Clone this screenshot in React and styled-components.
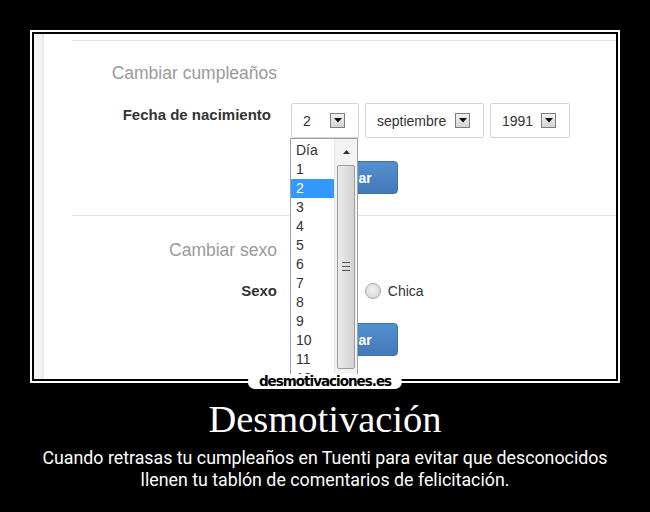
import styled, { createGlobalStyle } from "styled-components";

const GlobalStyle = createGlobalStyle`
  html, body {
    margin: 0;
    background: #000;
  }
`;

const days = ["Día", "1", "2", "3", "4", "5", "6", "7", "8", "9", "10", "11", "12"];

// flecha del desplegable, dibujada en svg
const Caret = () => (
  <svg width="8" height="5" viewBox="0 0 8 5">
    <path d="M0 0h8L4 4.5z" fill="#111" />
  </svg>
);

const Select = ({ value, width }) => (
  <SelectBox $w={width}>
    <span>{value}</span>
    <ArrowBtn>
      <Caret />
    </ArrowBtn>
  </SelectBox>
);

export default function App() {
  return (
    <Page>
      <GlobalStyle />
      <Frame>
        <Screen>
          <Rail />
          <Main>
            <Section $divider>
              <Heading>Cambiar cumpleaños</Heading>
              <FieldRow $top={20}>
                <Label $inset={6}>Fecha de nacimiento</Label>
                <Selects>
                  <Select value="2" width={68} />
                  <Select value="septiembre" width={119} />
                  <Select value="1991" width={80} />
                </Selects>
              </FieldRow>
              <FieldRow $top={23}>
                <span />
                <SaveButton>Guardar</SaveButton>
              </FieldRow>
            </Section>

            <Section $first={24}>
              <Heading>Cambiar sexo</Heading>
              <FieldRow $top={21}>
                <Label $top={2}>Sexo</Label>
                <Radios>
                  <Radio>
                    <Dot />
                    Chico
                  </Radio>
                  <Radio>
                    <Dot />
                    Chica
                  </Radio>
                </Radios>
              </FieldRow>
              <FieldRow $top={22}>
                <span />
                <SaveButton>Guardar</SaveButton>
              </FieldRow>
            </Section>
          </Main>

          <DayList>
            <Options>
              {days.map((d) => (
                <Option key={d} $active={d === "2"}>
                  {d}
                </Option>
              ))}
            </Options>
            <ScrollBar>
              <UpArrow>
                <svg width="7" height="4" viewBox="0 0 7 4">
                  <path d="M0 4L3.5 0 7 4z" fill="#333" />
                </svg>
              </UpArrow>
              <Thumb>
                <Grip />
              </Thumb>
            </ScrollBar>
          </DayList>
        </Screen>
        <Watermark>desmotivaciones.es</Watermark>
      </Frame>

      <Title>Desmotivación</Title>
      <Caption>
        Cuando retrasas tu cumpleaños en Tuenti para evitar que desconocidos
        <br />
        llenen tu tablón de comentarios de felicitación.
      </Caption>
    </Page>
  );
}

const Page = styled.div`
  width: 650px;
  height: 512px;
  background: #000;
  display: flex;
  flex-direction: column;
  align-items: center;
  padding-top: 30px;
  box-sizing: border-box;
  overflow: hidden;
`;

const Frame = styled.div`
  position: relative;
  border: 2px solid #fff;
  padding: 2px;
  background: #000;
`;

const Screen = styled.div`
  position: relative;
  width: 582px;
  height: 345px;
  background: #fff;
  display: flex;
  overflow: hidden;
  font-family: "Liberation Sans", Arial, sans-serif;
  color: #333;
`;

const Rail = styled.div`
  width: 9px;
  flex-shrink: 0;
  background: linear-gradient(to right, #f7f7f7, #f1f1f1);
  border-right: 1px solid #e4e4e4;
  margin-right: 4px;
`;

const Main = styled.div`
  flex: 1;
  padding: 6px 0 0 24px;
  display: flex;
  flex-direction: column;
`;

const Section = styled.div`
  display: flex;
  flex-direction: column;
  border-top: 1px solid #e6e6e6;
  padding-top: ${(p) => p.$first || 22}px;
  padding-bottom: ${(p) => (p.$divider ? 21 : 0)}px;
`;

const Heading = styled.div`
  width: 205px;
  text-align: right;
  font-size: 17.5px;
  line-height: 20px;
  color: #9a9a9a;
`;

const FieldRow = styled.div`
  display: grid;
  grid-template-columns: 205px 1fr;
  column-gap: 14px;
  margin-top: ${(p) => p.$top}px;
`;

const Label = styled.div`
  text-align: right;
  font-weight: bold;
  font-size: 15px;
  line-height: 16px;
  padding-top: ${(p) => (p.$top != null ? p.$top : 4)}px;
  padding-right: ${(p) => p.$inset || 0}px;
  color: #333;
`;

const Selects = styled.div`
  display: flex;
  gap: 6px;
`;

const SelectBox = styled.div`
  width: ${(p) => p.$w}px;
  height: 35px;
  box-sizing: border-box;
  border: 1px solid #d4d4d4;
  border-radius: 2px;
  background: #fff;
  display: flex;
  align-items: center;
  justify-content: space-between;
  padding: 0 13px 0 11px;
  font-size: 14px;
  color: #333;
`;

const ArrowBtn = styled.div`
  width: 15px;
  height: 15px;
  box-sizing: border-box;
  border: 1px solid #7e7e7e;
  background: linear-gradient(#f2f2f2, #d4d4d4);
  display: flex;
  align-items: center;
  justify-content: center;
`;

const SaveButton = styled.div`
  width: 107px;
  height: 33px;
  border-radius: 4px;
  background: linear-gradient(#5290cf, #4479b8);
  border: 1px solid #3f70aa;
  box-sizing: border-box;
  color: #fff;
  font-weight: bold;
  font-size: 14px;
  display: flex;
  align-items: center;
  justify-content: center;
`;

const Radios = styled.div`
  display: flex;
  gap: 15px;
  align-items: center;
  height: 20px;
`;

const Radio = styled.label`
  display: flex;
  align-items: center;
  gap: 7px;
  font-size: 14px;
  color: #333;
`;

const Dot = styled.span`
  width: 16px;
  height: 16px;
  box-sizing: border-box;
  border-radius: 50%;
  border: 1px solid #a9a9a9;
  background: radial-gradient(circle at 45% 40%, #f2f2f2, #cfcfcf);
`;

const DayList = styled.div`
  position: absolute;
  left: 256px;
  top: 104px;
  width: 68px;
  height: 250px;
  box-sizing: border-box;
  border: 1px solid #9aa3ad;
  background: #fff;
  display: flex;
`;

const Options = styled.div`
  flex: 1;
  padding-top: 2px;
`;

const Option = styled.div`
  height: 19px;
  line-height: 19px;
  padding-left: 5px;
  font-size: 14px;
  color: ${(p) => (p.$active ? "#fff" : "#333")};
  background: ${(p) => (p.$active ? "#3399ff" : "transparent")};
`;

const ScrollBar = styled.div`
  width: 22px;
  flex-shrink: 0;
  background: #f3f3f3;
  border-left: 1px solid #e6e6e6;
  display: flex;
  flex-direction: column;
  align-items: center;
`;

const UpArrow = styled.div`
  height: 26px;
  display: flex;
  align-items: center;
  justify-content: center;
`;

const Thumb = styled.div`
  width: 18px;
  height: 204px;
  box-sizing: border-box;
  border: 1px solid #9c9c9c;
  border-radius: 2px;
  background: linear-gradient(to right, #ececec, #dcdcdc 60%, #d2d2d2);
  display: flex;
  justify-content: center;
  padding-top: 96px;
`;

const Grip = styled.div`
  width: 8px;
  height: 7px;
  border-top: 1px solid #555;
  border-bottom: 1px solid #555;
  position: relative;
  &::after {
    content: "";
    position: absolute;
    left: 0;
    right: 0;
    top: 3px;
    border-top: 1px solid #555;
  }
`;

const Watermark = styled.div`
  position: absolute;
  left: 50%;
  bottom: -8px;
  transform: translateX(-50%);
  background: #fff;
  color: #000;
  padding: 0 11px;
  height: 15px;
  line-height: 15px;
  border-radius: 7px;
  font-family: "DejaVu Sans", sans-serif;
  font-weight: bold;
  font-size: 13.5px;
  letter-spacing: -1px;
  white-space: nowrap;
`;

const Title = styled.div`
  margin-top: 14px;
  font-family: "Liberation Serif", "Times New Roman", serif;
  font-size: 38.5px;
  line-height: 44px;
  color: #fff;
`;

const Caption = styled.div`
  margin-top: 6px;
  font-family: Roboto, "Liberation Sans", sans-serif;
  font-size: 17.8px;
  line-height: 22px;
  color: #fff;
  text-align: center;
`;
